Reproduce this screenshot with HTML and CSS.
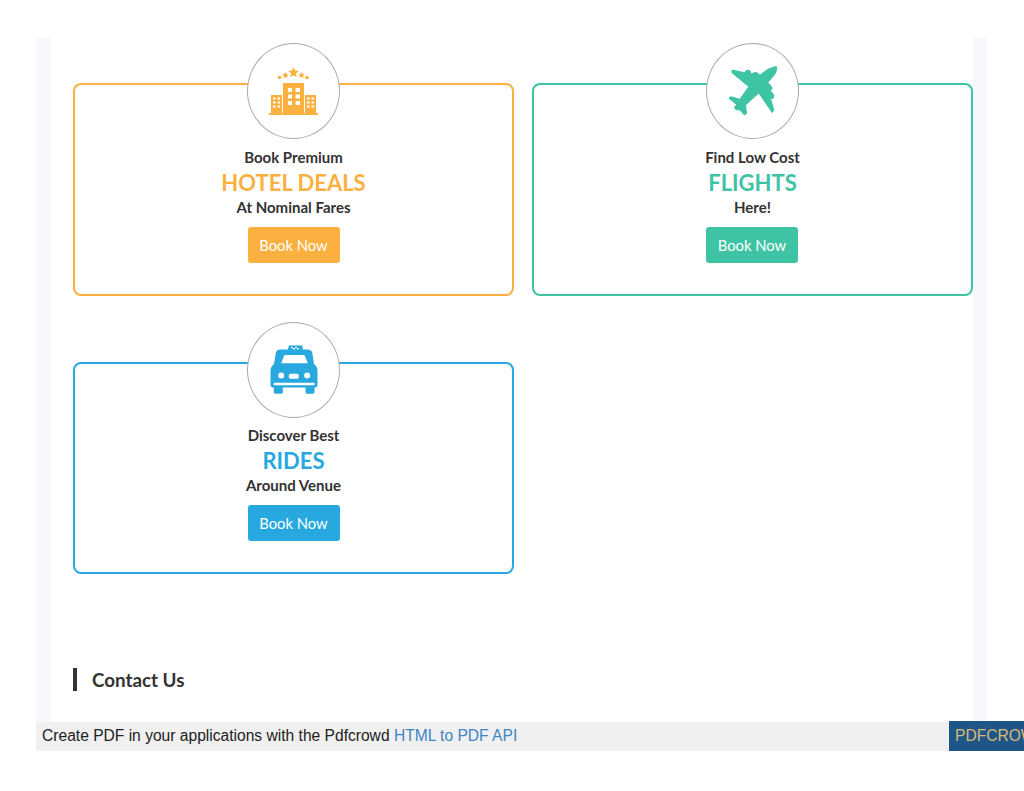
FILE: index.html
```html
<!DOCTYPE html>
<html lang="en">
<head>
<meta charset="utf-8">
<title>Book Now</title>
<link rel="stylesheet" href="styles.css">
</head>
<body>
<main class="page">
  <div class="cards">
    <article class="card card-hotel">
      <div class="badge">
        <svg class="icon" viewBox="0 0 50 50" width="50" height="50" aria-hidden="true">
          <polygon points="24.500,1 26,4.600 29.800,4.900 26.900,7.400 27.800,11.200 24.500,9.200 21.200,11.200 22.100,7.400 19.200,4.900 23,4.600"/>
          <polygon points="32.500,6 33.500,8 35.700,8.300 34.100,9.800 34.500,12 32.500,11 30.500,12 30.900,9.800 29.300,8.300 31.500,8"/>
          <polygon points="16.500,6 17.500,8 19.700,8.300 18.100,9.800 18.500,12 16.500,11 14.500,12 14.900,9.800 13.300,8.300 15.500,8"/>
          <circle cx="10.500" cy="11.500" r="1.800"/>
          <circle cx="38" cy="11.500" r="1.800"/>
          <path fill-rule="evenodd" d="M14 17H35V47H14ZM19 22V26H23V22ZM26.500 22V26H31V22ZM19 28.500V32.500H23V28.500ZM26.500 28.500V32.500H31V28.500ZM19 35V39H23V35ZM26.500 35V39H31V35Z"/>
          <path fill-rule="evenodd" d="M2 29H13V47H2ZM4 31.500V33.500H6.500V31.500ZM8.500 31.500V33.500H11V31.500ZM4 35.500V37.500H6.500V35.500ZM8.500 35.500V37.500H11V35.500ZM4 39.500V41.500H6.500V39.500ZM8.500 39.500V41.500H11V39.500Z"/>
          <path fill-rule="evenodd" d="M36 29H47V47H36ZM38 31.500V33.500H40.500V31.500ZM42.500 31.500V33.500H45V31.500ZM38 35.500V37.500H40.500V35.500ZM42.500 35.500V37.500H45V35.500ZM38 39.500V41.500H40.500V39.500ZM42.500 39.500V41.500H45V39.500Z"/>
          <rect x="0" y="47" width="49" height="2"/>
        </svg>
      </div>
      <p class="line">Book Premium</p>
      <h2 class="title">HOTEL DEALS</h2>
      <p class="line">At Nominal Fares</p>
      <a class="btn" href="#">Book Now</a>
    </article>
    <article class="card card-flight">
      <div class="badge">
        <svg class="icon" viewBox="0 0 50 50" width="50" height="50" aria-hidden="true">
          <path stroke="currentColor" stroke-width="1" stroke-linejoin="round" d="M4 4L16.500 6.700L19 4L21.800 4.700L23 8L27.500 6.300L30 7.300L31.800 9.300L39.800 3.300L47.500 0.500L49 1.300L47.500 7.300L39.800 16.700L43.200 20L44 23.300L41.800 24L45.800 29L45.200 32.300L42.500 32.300L45.800 44L44.200 46.500L30.800 27L17.500 39L18.500 47.300L16.500 49L11.800 44L7.500 43.300L6.500 40.700L9.200 39L1 32.300L2.500 30.700L11.800 33.300L20.800 20.700L4 6.700Z"/>
        </svg>
      </div>
      <p class="line">Find Low Cost</p>
      <h2 class="title">FLIGHTS</h2>
      <p class="line">Here!</p>
      <a class="btn" href="#">Book Now</a>
    </article>
    <article class="card card-ride">
      <div class="badge">
        <svg class="icon" viewBox="0 0 50 50" width="50" height="50" aria-hidden="true">
          <path fill-rule="evenodd" d="M19.800 0.500H33.200L34 4.500H38.500C41.500 4.500 42.800 6 43.300 8L45 19C47.500 21 48.500 23 48.500 26V40C48.500 41.500 47.500 42.500 46 42.500H45.500V47C45.500 48.200 44.700 48.800 43.500 48.800H38.500C37.300 48.800 36.500 48.200 36.500 47V42.500H13.800V47C13.800 48.200 13 48.800 11.800 48.800H6.800C5.600 48.800 4.800 48.200 4.800 47V42.500H4C2.500 42.500 1.500 41.500 1.500 40V26C1.500 23 2.500 21 5 19L6.800 8C7.300 6 8.500 4.500 11.500 4.500H19ZM16.500 10C15.500 10 15 10.700 14.800 11.500L12.200 18.200H38.800L36.200 11.500C36 10.700 35.500 10 34.500 10ZM12.200 27.500A3 3 0 1 0 12.200 33.500A3 3 0 1 0 12.200 27.500ZM38.200 27.500A3 3 0 1 0 38.200 33.500A3 3 0 1 0 38.200 27.500ZM21.300 28.800C20.300 28.800 19.800 29.800 19.800 31.300C19.800 32.800 20.300 33.800 21.300 33.800H28.300C29.300 33.800 29.800 32.800 29.800 31.300C29.800 29.800 29.300 28.800 28.300 28.800ZM4.800 37.800V40.300H45.500V37.800ZM22 2V3.200H24V2ZM26 2V3.200H28V2ZM24 3.200V4.400H26V3.200ZM28 3.200V4.400H30V3.200Z"/>
        </svg>
      </div>
      <p class="line">Discover Best</p>
      <h2 class="title">RIDES</h2>
      <p class="line">Around Venue</p>
      <a class="btn" href="#">Book Now</a>
    </article>
  </div>
  <h2 class="section-title">Contact Us</h2>
</main>
<footer class="pdfbar">
  <span class="pdfbar-text">Create PDF in your applications with the Pdfcrowd <a class="pdfbar-link" href="#">HTML to PDF API</a></span>
  <span class="pdfbar-brand">PDFCROWD</span>
</footer>
</body>
</html>
```
FILE: styles.css
```css
* { box-sizing: border-box; }
html, body { overflow: hidden; }
body {
  margin: 0;
  width: 1024px;
  height: 791px;
  padding: 38px 0 0 36px;
  background: #fff;
  font-family: Lato, sans-serif;
  color: #333;
}
.page {
  width: 951px;
  height: 684px;
  border-left: 15px solid #f7f7fe;
  border-right: 14px solid #f7f7fe;
  padding: 45px 0 0 22px;
  background: #fff;
}
.cards {
  display: grid;
  grid-template-columns: 441px 441px;
  column-gap: 18px;
  row-gap: 66px;
  justify-content: start;
  align-items: start;
}
.card {
  height: 212.500px;
  border: 2px solid;
  border-radius: 8px;
  display: flex;
  flex-direction: column;
  align-items: center;
  text-align: center;
  background: #fff;
}
.card-hotel { border-color: #fbb040; color: #fbb040; }
.card-flight { border-color: #3ec3a5; color: #3ec3a5; }
.card-ride { border-color: #27a9e0; color: #27a9e0; }
.badge {
  width: 93px;
  height: 96px;
  margin: -42px 0 8.500px;
  border: 1px solid #aaa;
  border-radius: 50%;
  background: #fff;
  display: flex;
  align-items: center;
  justify-content: center;
  flex: none;
}
.icon { fill: currentColor; display: block; }
.line {
  margin: 0;
  font-size: 15px;
  line-height: 18px;
  font-weight: 700;
  color: #333;
}
.title {
  margin: 1px 0 -1px;
  font-size: 22px;
  line-height: 32px;
  font-weight: 700;
  color: inherit;
}
.btn {
  margin-top: 11px;
  width: 92px;
  height: 36px;
  border-radius: 3px;
  display: flex;
  align-items: center;
  justify-content: center;
  text-decoration: none;
  font-size: 14.800px;
}
.card-hotel .btn { background: #fbb040; color: #fff; }
.card-flight .btn { background: #3ec3a5; color: #fff; margin-right: 1px; }
.card-ride .btn { background: #27a9e0; color: #fff; }
.section-title {
  margin: 94px 0 0;
  height: 23px;
  border-left: 4px solid #333;
  padding-left: 15px;
  font-size: 18.800px;
  line-height: 24px;
  font-weight: 700;
  color: #333;
}
.pdfbar {
  width: 1100px;
  height: 29px;
  padding-bottom: 2px;
  background: #f0f0f0;
  display: flex;
  align-items: center;
  justify-content: space-between;
  font-family: "Liberation Sans", Arial, sans-serif;
  font-size: 15.600px;
  line-height: 27px;
  color: #222;
  position: relative;
}
.pdfbar-text { padding-left: 6px; }
.pdfbar-link { color: #3d85c6; text-decoration: none; }
.pdfbar-brand {
  position: absolute;
  left: 913px;
  top: -1px;
  height: 30px;
  padding: 0 6px 2px;
  background: #1f5688;
  color: #d8b878;
  display: flex;
  align-items: center;
}
```
